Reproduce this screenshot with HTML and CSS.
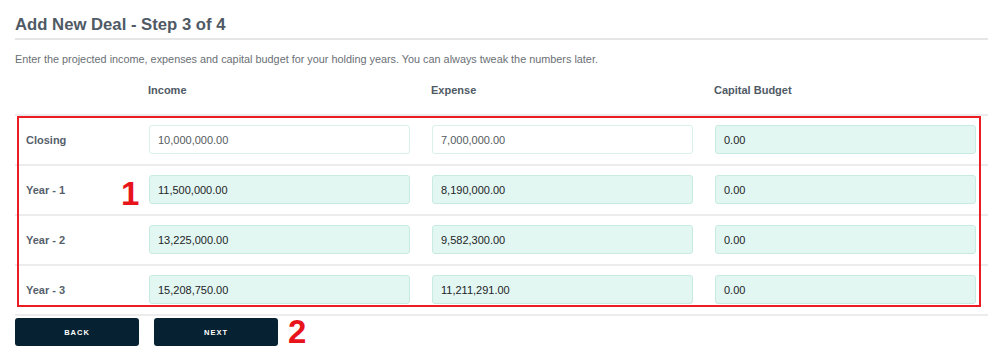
FILE: index.html
```html
<!DOCTYPE html>
<html lang="en">
<head>
  <meta charset="UTF-8">
  <title>Add New Deal - Step 3 of 4</title>
  <link rel="stylesheet" href="styles.css">
</head>
<body>
<div class="container">
  <h1>Add New Deal - Step 3 of 4</h1>
  <p class="intro">Enter the projected income, expenses and capital budget for your holding years. You can always tweak the numbers later.</p>

  <div class="grid head">
    <div></div>
    <div>Income</div>
    <div>Expense</div>
    <div>Capital Budget</div>
  </div>

  <div class="rows">
    <div class="grid row">
      <label>Closing</label>
      <input type="text" class="plain" value="10,000,000.00">
      <input type="text" class="plain" value="7,000,000.00">
      <input type="text" value="0.00">
    </div>
    <div class="grid row">
      <label>Year - 1</label>
      <input type="text" value="11,500,000.00">
      <input type="text" value="8,190,000.00">
      <input type="text" value="0.00">
    </div>
    <div class="grid row">
      <label>Year - 2</label>
      <input type="text" value="13,225,000.00">
      <input type="text" value="9,582,300.00">
      <input type="text" value="0.00">
    </div>
    <div class="grid row">
      <label>Year - 3</label>
      <input type="text" value="15,208,750.00">
      <input type="text" value="11,211,291.00">
      <input type="text" value="0.00">
    </div>
    <div class="mark box"></div>
    <div class="mark num num1">1</div>
  </div>

  <div class="actions">
    <button>BACK</button>
    <button>NEXT</button>
    <span class="num num2">2</span>
  </div>
</div>
</body>
</html>
```

FILE: styles.css
```css
body {
  font-family: "Liberation Sans", Arial, sans-serif;
  margin: 0;
  background: white;
  color: #4f5a65;
}
.container {
  padding: 0 12px 0 15px;
}
h1 {
  font-size: 16.7px;
  line-height: 20px;
  margin: 0;
  padding: 15px 0 3px 0;
  border-bottom: 2px solid #e6e6e6;
  color: #4f5a65;
}
.intro {
  font-size: 10.85px;
  line-height: 14px;
  margin: 12px 0 0 0;
  color: #6a6f75;
}
.grid {
  display: grid;
  grid-template-columns: 101px 1fr 1fr 1fr;
  column-gap: 22px;
  padding: 0 12px 0 11px;
}
.head {
  font-size: 11px;
  font-weight: bold;
  line-height: 14px;
  margin-top: 17px;
  height: 31px;
}
.head div {
  margin-left: -1px;
}
.rows {
  position: relative;
  border-bottom: 2px solid #ececec;
}
.row {
  border-top: 2px solid #ececec;
  padding-top: 9px;
  padding-bottom: 10px;
  align-items: center;
}
.row label {
  font-size: 11px;
  font-weight: bold;
  color: #56606b;
}
input {
  font-family: "Liberation Sans", Arial, sans-serif;
  font-size: 11px;
  height: 29px;
  box-sizing: border-box;
  padding: 0 8px;
  border: 1px solid #c8ebe1;
  border-radius: 3px;
  background: #e2f7f2;
  color: #1e2327;
  width: 100%;
}
input.plain {
  background: white;
  border-color: #d9f1ea;
  color: #555b60;
}
.mark.box {
  position: absolute;
  left: 2px;
  top: 2px;
  width: 960px;
  height: 187px;
  border: 2px solid #ea1c24;
}
.num {
  color: #e8141c;
  font-weight: bold;
  font-size: 33px;
  line-height: 28px;
}
.num1 {
  position: absolute;
  left: 106px;
  top: 66px;
}
.actions {
  display: flex;
  align-items: center;
  gap: 15px;
  margin-top: 2px;
}
button {
  width: 124px;
  height: 28px;
  background-color: #062131;
  color: white;
  border: none;
  border-radius: 3px;
  font-family: "Liberation Sans", Arial, sans-serif;
  font-size: 7.5px;
  font-weight: bold;
  letter-spacing: 1px;
  cursor: pointer;
}
.num2 {
  margin-left: -5px;
}
```
